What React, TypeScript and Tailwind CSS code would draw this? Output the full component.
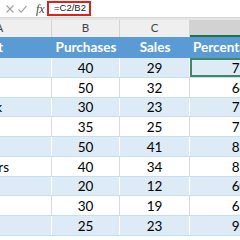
import React from 'react';

type Row = { name: string; namePad: string; purchases: number; sales: number };

const rows: Row[] = [
  { name: 'Pens', namePad: 'pr-[60px]', purchases: 40, sales: 29 },
  { name: 'Pencils', namePad: 'pr-[60px]', purchases: 50, sales: 32 },
  { name: 'Notebook', namePad: 'pr-[49px]', purchases: 30, sales: 23 },
  { name: 'Erasers', namePad: 'pr-[60px]', purchases: 35, sales: 25 },
  { name: 'Music', namePad: 'pr-[51px]', purchases: 50, sales: 41 },
  { name: 'Markers', namePad: 'pr-[42px]', purchases: 40, sales: 34 },
  { name: 'Staplers', namePad: 'pr-[60px]', purchases: 20, sales: 12 },
  { name: 'Folders', namePad: 'pr-[60px]', purchases: 30, sales: 19 },
  { name: 'Binders', namePad: 'pr-[60px]', purchases: 25, sales: 23 },
];

const pct = (r: Row) => `${Math.round((r.sales / r.purchases) * 100)}%`;

const FormulaBar = () => (
  <div className="flex h-[18px] items-center border-b border-[#d4d4d4] bg-white">
    <div className="flex w-[47px] shrink-0 items-center">
      <svg width="8" height="8" viewBox="0 0 8 8" className="ml-[6px]">
        <path d="M0.5 0.5L7.5 7.5M7.5 0.5L0.5 7.5" stroke="#a0a0a0" strokeWidth="1.1" />
      </svg>
      <svg width="9" height="8" viewBox="0 0 9 8" className="ml-[4px]">
        <path d="M0.5 4.5L3.2 7.2L8.5 0.8" stroke="#a0a0a0" strokeWidth="1.1" fill="none" />
      </svg>
      <span className="ml-[9px] font-['Liberation_Serif'] text-[12px] italic text-[#444]">fx</span>
    </div>
    <div className="flex h-[15px] w-[44px] items-center border-2 border-[#e0201d] pl-[5px] font-['Liberation_Sans'] text-[9.5px] text-[#222]">
      =C2/B2
    </div>
  </div>
);

const ColumnLetters = () => (
  <div className="flex h-[17px] bg-[#efefef] text-[11.5px] text-[#444]">
    <div className="-ml-[52px] flex w-[104px] shrink-0 items-end justify-center border-r border-[#d4d4d4] pb-[1px]">A</div>
    <div className="flex w-[68px] shrink-0 items-end justify-center border-r border-[#d4d4d4] pb-[1px]">B</div>
    <div className="flex w-[70px] shrink-0 items-end justify-center border-r border-[#d4d4d4] pb-[1px]">C</div>
    <div className="flex w-[110px] shrink-0 items-end justify-center border-b-2 border-[#217346] bg-[#d2d2d2] pb-[1px]">D</div>
  </div>
);

export default function App() {
  return (
    <div className="h-[240px] w-[240px] overflow-hidden bg-white font-['Lato',sans-serif]">
      <FormulaBar />
      <div className="h-[2px] bg-[#e6e6e6]" />
      <ColumnLetters />
      <div className="flex h-[21px] bg-[#5b9bd5] text-[13.5px] font-bold text-white">
        <div className="-ml-[52px] flex w-[104px] shrink-0 items-center justify-end pr-[49px]">Product</div>
        <div className="flex w-[68px] shrink-0 items-center justify-center">Purchases</div>
        <div className="flex w-[70px] shrink-0 items-center justify-center">Sales</div>
        <div className="flex w-[110px] shrink-0 items-center justify-start pl-[3px]">Percentage</div>
      </div>
      {rows.map((r, i) => {
        const band = i % 2 === 0;
        const line = band ? 'border-white' : 'border-[#d9d9d9]';
        return (
          <div
            key={r.name}
            className={`flex h-[19.75px] border-b border-[#c9ddf0] text-[13.5px] text-black ${band ? 'bg-[#ddebf7]' : 'bg-white'}`}
          >
            <div className={`-ml-[52px] flex w-[104px] shrink-0 items-center justify-end border-r pt-[1px] ${line} ${r.namePad}`}>
              {r.name}
            </div>
            <div className={`flex w-[68px] shrink-0 items-center justify-center border-r pt-[1px] ${line}`}>{r.purchases}</div>
            <div className={`flex w-[70px] shrink-0 items-center justify-center border-r pt-[1px] ${line}`}>{r.sales}</div>
            <div
              className={`flex w-[110px] shrink-0 items-center justify-center pt-[1px] ${i === 0 ? 'border-2 border-[#3f8a5c]' : ''}`}
            >
              {pct(r)}
            </div>
          </div>
        );
      })}
    </div>
  );
}
